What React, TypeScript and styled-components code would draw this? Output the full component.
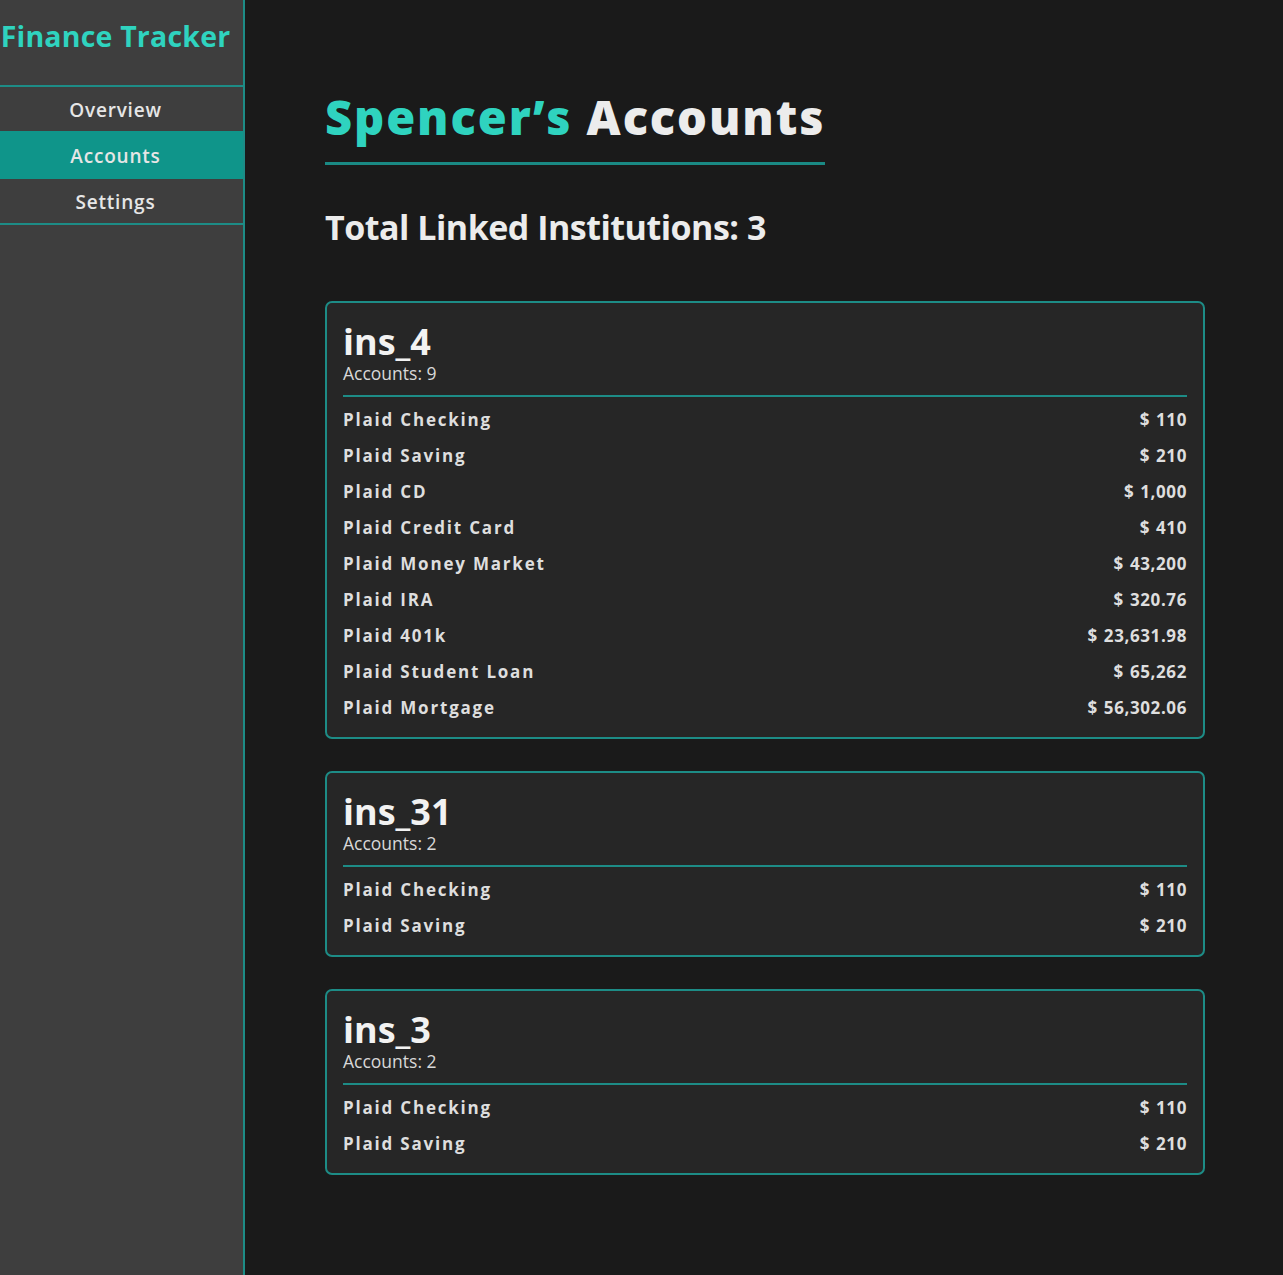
import React from "react";
import styled, { createGlobalStyle } from "styled-components";

const Global = createGlobalStyle`
  html, body { margin: 0; padding: 0; background: #1a1a1a; }
  body { font-family: "Open Sans", "Noto Sans", sans-serif; color: #e6e6e6; }
  * { box-sizing: border-box; }
`;

const Layout = styled.div`
  display: flex;
  min-height: 1275px;
  background: #1a1a1a;
`;

const Sidebar = styled.aside`
  width: 245px;
  flex-shrink: 0;
  background: #3e3e3e;
  border-right: 2px solid #1d8c86;
  display: flex;
  flex-direction: column;
`;

const Brand = styled.div`
  height: 87px;
  border-bottom: 2px solid #1d8c86;
  display: flex;
  align-items: flex-start;
  justify-content: center;
  padding: 17px 12px 0 0;
  font-size: 28.5px;
  font-weight: 700;
  letter-spacing: 0.2px;
  color: #2fd3bf;
  white-space: nowrap;
`;

const Nav = styled.nav`
  display: flex;
  flex-direction: column;
  border-bottom: 2px solid #1d8c86;
`;

const NavItem = styled.div<{ $active?: boolean }>`
  height: ${(p) => (p.$active ? 48 : 44)}px;
  display: flex;
  align-items: center;
  justify-content: center;
  padding-right: 12px;
  padding-top: 1px;
  font-size: 19px;
  font-weight: 600;
  letter-spacing: 0.8px;
  color: #e6e6e6;
  background: ${(p) => (p.$active ? "#0f958a" : "transparent")};
`;

const Main = styled.main`
  flex: 1;
  padding: 86px 78px 60px 80px;
`;

const Title = styled.h1`
  margin: 0;
  display: block;
  font-size: 47px;
  font-weight: 800;
  letter-spacing: 1.9px;
  line-height: 62px;
  color: #ececec;
  padding-bottom: 14px;
  border-bottom: 3px solid #1a8a84;
  width: 500px;
  white-space: nowrap;
`;

const Accent = styled.span`
  color: #2fd3bf;
`;

const Subtitle = styled.h2`
  margin: 39px 0 51px;
  font-size: 34px;
  font-weight: 700;
  color: #ececec;
  letter-spacing: -0.5px;
`;

const Cards = styled.div`
  display: flex;
  flex-direction: column;
  gap: 32px;
`;

const Card = styled.section`
  background: #262626;
  border: 2px solid #1d8c86;
  border-radius: 7px;
  padding: 18px 16px 12px;
`;

const CardTitle = styled.div`
  font-size: 36px;
  font-weight: 700;
  line-height: 42px;
  color: #f2f2f2;
`;

const CardCount = styled.div`
  font-size: 17.5px;
  line-height: 20px;
  color: #d8d8d8;
  padding-bottom: 12px;
  border-bottom: 2px solid #1d8c86;
`;

const Rows = styled.div`
  display: flex;
  flex-direction: column;
  padding-top: 4px;
`;

const Row = styled.div`
  display: flex;
  justify-content: space-between;
  align-items: center;
  height: 36px;
  font-size: 17px;
  font-weight: 700;
  color: #dedede;
`;

const RowName = styled.span`
  letter-spacing: 1.8px;
`;

const RowValue = styled.span`
  letter-spacing: 0.6px;
  word-spacing: 1px;
`;

const data = [
  {
    name: "ins_4",
    accounts: [
      ["Plaid Checking", "$ 110"],
      ["Plaid Saving", "$ 210"],
      ["Plaid CD", "$ 1,000"],
      ["Plaid Credit Card", "$ 410"],
      ["Plaid Money Market", "$ 43,200"],
      ["Plaid IRA", "$ 320.76"],
      ["Plaid 401k", "$ 23,631.98"],
      ["Plaid Student Loan", "$ 65,262"],
      ["Plaid Mortgage", "$ 56,302.06"],
    ],
  },
  {
    name: "ins_31",
    accounts: [
      ["Plaid Checking", "$ 110"],
      ["Plaid Saving", "$ 210"],
    ],
  },
  {
    name: "ins_3",
    accounts: [
      ["Plaid Checking", "$ 110"],
      ["Plaid Saving", "$ 210"],
    ],
  },
];

export default function App() {
  return (
    <>
      <Global />
      <Layout>
        <Sidebar>
          <Brand>Finance Tracker</Brand>
          <Nav>
            <NavItem>Overview</NavItem>
            <NavItem $active>Accounts</NavItem>
            <NavItem>Settings</NavItem>
          </Nav>
        </Sidebar>
        <Main>
          <Title>
            <Accent>Spencer’s</Accent> Accounts
          </Title>
          <Subtitle>Total Linked Institutions: 3</Subtitle>
          <Cards>
            {data.map((ins) => (
              <Card key={ins.name}>
                <CardTitle>{ins.name}</CardTitle>
                <CardCount>Accounts: {ins.accounts.length}</CardCount>
                <Rows>
                  {ins.accounts.map(([n, v]) => (
                    <Row key={n}>
                      <RowName>{n}</RowName>
                      <RowValue>{v}</RowValue>
                    </Row>
                  ))}
                </Rows>
              </Card>
            ))}
          </Cards>
        </Main>
      </Layout>
    </>
  );
}
